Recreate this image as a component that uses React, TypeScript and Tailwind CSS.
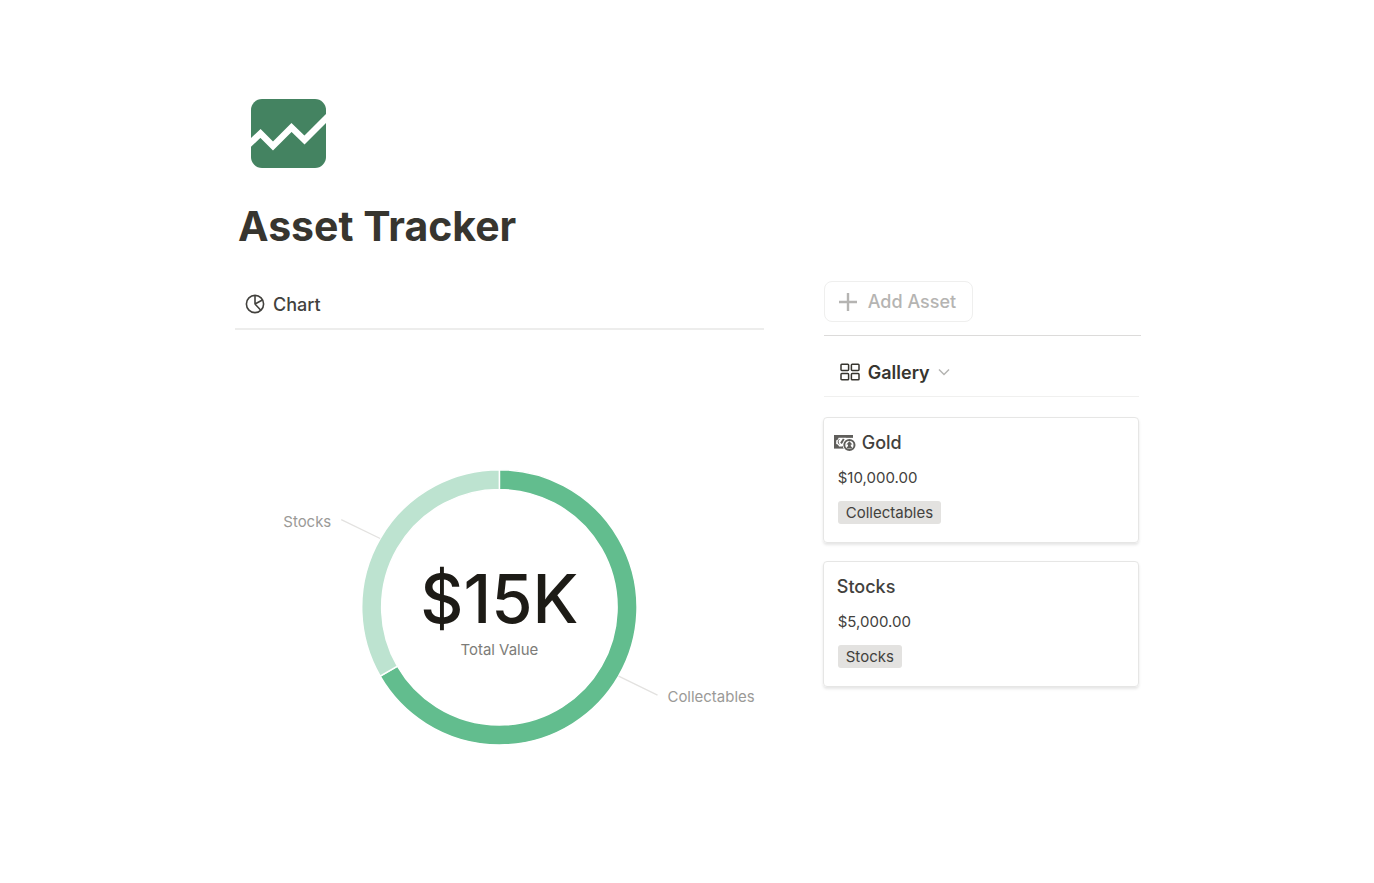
import { useState } from 'react'

type Asset = {
    name: string
    value: number
    category: string
    hasIcon?: boolean
}

const assets: Asset[] = [
    { name: 'Gold', value: 10000, category: 'Collectables', hasIcon: true },
    { name: 'Stocks', value: 5000, category: 'Stocks' },
]

const SLICE_COLORS = ['#62bd8e', '#bde3d0']

function formatMoney(value: number) {
    return value.toLocaleString('en-US', { style: 'currency', currency: 'USD' })
}

function TrendLogo() {
    return (
        <svg viewBox="0 0 75 69" className="ml-4 h-[69px] w-[75px]" aria-hidden="true">
            <rect width="75" height="69" rx="11" fill="#448361" />
            <path d="M-4 47 L9.5 34.5 L22 47 L40.5 28.5 L53.5 41 L79 15.5" fill="none" stroke="#fff" strokeWidth="6.4" />
        </svg>
    )
}

function PieIcon() {
    return (
        <svg viewBox="0 0 20 20" className="h-5 w-5" fill="none" stroke="currentColor" strokeWidth="1.6" aria-hidden="true">
            <circle cx="10" cy="10" r="8.6" />
            <path d="M10 1.4V10L17.4 6M10 10L15.8 16.2" strokeLinejoin="round" />
        </svg>
    )
}

function GalleryIcon() {
    return (
        <svg viewBox="0 0 20 18" className="h-[18px] w-5" fill="none" stroke="currentColor" strokeWidth="1.5" aria-hidden="true">
            <rect x="1" y="1.2" width="7.6" height="6.2" rx="0.8" />
            <rect x="11.4" y="1.2" width="7.6" height="6.2" rx="0.8" />
            <rect x="1" y="10.6" width="7.6" height="6.2" rx="0.8" />
            <rect x="11.4" y="10.6" width="7.6" height="6.2" rx="0.8" />
        </svg>
    )
}

function CashIcon() {
    return (
        <svg viewBox="0 1 22 17" className="h-[17px] w-[22px]" aria-hidden="true">
            <rect y="1" width="19" height="13.6" fill="#5f5e5b" />
            <path fill="#fff" d="M4.6 3.8H19v3L8 12.6H5A3 3 0 0 0 2.2 10V6.4A3 3 0 0 0 4.6 3.8z" />
            <path d="M5.4 5.2a3.4 3.4 0 0 0 0 5.2" fill="none" stroke="#5f5e5b" strokeWidth="1" />
            <path d="M7 9.4L9.8 5" stroke="#5f5e5b" strokeWidth="2" />
            <circle cx="15.4" cy="11" r="6.8" fill="#fff" />
            <path d="M12 1h7v2.4h-7z" fill="#5f5e5b" />
            <circle cx="15.4" cy="11" r="5.1" fill="#fff" stroke="#5f5e5b" strokeWidth="2" />
            <path fill="#5f5e5b" d="M15.4 7.2l3 3.4h-1.6v1.4l2 2.6H12l2-2.6v-1.4h-1.6z" />
        </svg>
    )
}

const CX = 265
const CY = 278
const OUTER = 138
const INNER = 118

function point(angle: number, radius: number) {
    const rad = (angle * Math.PI) / 180
    return [CX + radius * Math.sin(rad), CY - radius * Math.cos(rad)]
}

function slicePath(start: number, end: number) {
    const large = end - start > 180 ? 1 : 0
    const [x1, y1] = point(start, OUTER)
    const [x2, y2] = point(end, OUTER)
    const [x3, y3] = point(end, INNER)
    const [x4, y4] = point(start, INNER)
    return `M${x1} ${y1}A${OUTER} ${OUTER} 0 ${large} 1 ${x2} ${y2}L${x3} ${y3}A${INNER} ${INNER} 0 ${large} 0 ${x4} ${y4}Z`
}

function DonutChart() {
    const total = assets.reduce((sum, a) => sum + a.value, 0)
    let angle = 0
    const slices = assets.map((a, i) => {
        const start = angle
        angle += (a.value / total) * 360
        return { label: a.category, start, end: angle, color: SLICE_COLORS[i] }
    })

    return (
        <svg viewBox="0 0 530 420" className="h-auto w-full" role="img" aria-label="Total value by category">
            {slices.map((s) => {
                const mid = (s.start + s.end) / 2
                const [x, y] = point(mid, OUTER)
                const side = mid < 180 ? 1 : -1
                return (
                    <g key={s.label}>
                        <path d={slicePath(s.start, s.end)} fill={s.color} stroke="#fff" strokeWidth="1.5" />
                        <path d={`M${x} ${y}l${side * 39} ${side * 19}`} stroke="#e3e2e0" strokeWidth="1.3" />
                        <text
                            x={x + side * 49}
                            y={y + side * 19 + 7}
                            textAnchor={side > 0 ? 'start' : 'end'}
                            className="fill-[#9b9a97] text-[15px]"
                        >
                            {s.label}
                        </text>
                    </g>
                )
            })}
            <text x={CX} y={CY + 16} textAnchor="middle" className="fill-[#1d1b16] text-[67px] font-medium">
                ${total / 1000}K
            </text>
            <text x={CX} y={CY + 48} textAnchor="middle" className="fill-[#7d7c78] text-[15px]">
                Total Value
            </text>
        </svg>
    )
}

function AssetCard({ asset }: { asset: Asset }) {
    return (
        <article className="rounded-[4px] border border-[#e6e6e5] px-[14px] pt-[13px] pb-[18px] shadow-[0_2px_3px_rgba(0,0,0,0.1)]">
            <h2 className="-ml-1 flex items-center gap-[6px] text-[18px] leading-6 font-medium">
                {asset.hasIcon ? <CashIcon /> : <span className="-mr-[3px]" />}
                {asset.name}
            </h2>
            <p className="mt-[11px] text-[15px] leading-6">{formatMoney(asset.value)}</p>
            <span className="mt-[11px] block w-fit rounded-[3px] bg-[#e3e2e0] px-2 text-[15px] leading-[23px]">
                {asset.category}
            </span>
        </article>
    )
}

export default function App() {
    const [view, setView] = useState('Gallery')

    return (
        <main className="mx-auto max-w-[956px] bg-white pt-[99px] pr-6 pb-16 pl-[26px] font-['Inter',sans-serif] text-[#42413d]">
            <TrendLogo />
            <h1 className="mt-8 ml-[3px] text-[41px] leading-[52px] font-bold text-[#37352f]">Asset Tracker</h1>

            <div className="mt-[29px] grid gap-[60px] md:grid-cols-[5fr_3fr]">
                <section>
                    <div className="flex h-[49px] items-center gap-2 border-b-2 border-[#ededec] pb-px pl-[10px]">
                        <PieIcon />
                        <span className="text-[18px] font-medium">Chart</span>
                    </div>
                    <DonutChart />
                </section>

                <section>
                    <button
                        type="button"
                        className="flex h-[41px] items-center gap-[11px] rounded-[8px] border border-[#efefee] pr-4 pl-[14px] text-[18px] font-medium text-[#b5b4b2]"
                    >
                        <svg viewBox="0 0 18 18" className="h-[18px] w-[18px]" stroke="currentColor" strokeWidth="2.4" aria-hidden="true">
                            <path d="M9 0v18M0 9h18" />
                        </svg>
                        Add Asset
                    </button>
                    <hr className="mt-[13px] border-[#dcdbda]" />

                    {/* View switcher */}
                    <div className="mr-[2px] flex h-[61px] items-center border-b border-[#f0f0ef] pt-3 pl-4">
                        <button
                            type="button"
                            onClick={() => setView(view === 'Gallery' ? 'List' : 'Gallery')}
                            className="flex items-center gap-2 text-[18px] font-semibold text-[#37352f]"
                        >
                            <GalleryIcon />
                            {view}
                            <svg viewBox="0 0 12 8" className="h-2 w-3" fill="none" stroke="#b5b4b2" strokeWidth="1.5" aria-hidden="true">
                                <path d="M1 1.5l5 5 5-5" />
                            </svg>
                        </button>
                    </div>

                    <div className="mt-5 mr-[2px] -ml-px flex flex-col gap-[18px]">
                        {assets.map((a) => (
                            <AssetCard key={a.name} asset={a} />
                        ))}
                    </div>
                </section>
            </div>
        </main>
    )
}
